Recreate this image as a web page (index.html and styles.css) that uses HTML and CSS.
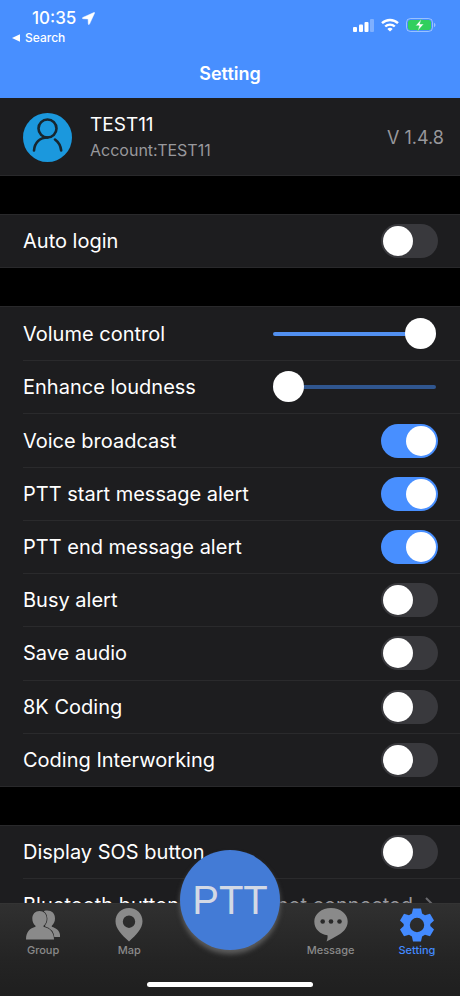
FILE: index.html
```html
<!DOCTYPE html>
<html lang="en">
<head>
<meta charset="utf-8">
<meta name="viewport" content="width=device-width, initial-scale=1">
<title>Setting</title>
<link rel="stylesheet" href="styles.css">
</head>
<body>
<div class="app">
  <header class="header">
    <div class="status">
      <div class="status-left">
        <div class="clock">10:35
          <svg width="13" height="13" viewBox="0 0 13 13" aria-hidden="true"><path d="M12 .5.8 5.500c-.6.3-.5 1.200.2 1.200l5.100.2.2 5c0 .8.9.9 1.200.2L12.600 1c.2-.4-.2-.7-.6-.5z" fill="#fff" stroke="#fff" stroke-width=".5"/></svg>
        </div>
        <a class="back" href="#search"><svg width="8" height="8" viewBox="0 0 8 8" aria-hidden="true"><path d="M0 4 8 .2v7.6z" fill="#fff"/></svg>Search</a>
      </div>
      <div class="status-right">
        <svg width="21" height="14" viewBox="0 0 21 14" aria-hidden="true"><g fill="#fff"><rect x="0" y="9" width="4" height="5" rx="1"/><rect x="6" y="6.500" width="4" height="7.500" rx="1"/><rect x="11.500" y="4" width="4" height="10" rx="1"/><rect x="17" y="1" width="4" height="13" rx="1" opacity=".3"/></g></svg>
        <svg width="18" height="14" viewBox="0 0 18 14" aria-hidden="true"><g fill="none" stroke="#fff" stroke-width="2.400"><path d="M1 5.200a11.500 11.500 0 0 1 16 0"/><path d="M4.200 8.500a7 7 0 0 1 9.600 0"/></g><path d="M9 13.600 6.300 10.900a4 4 0 0 1 5.400 0z" fill="#fff"/></svg>
        <svg width="30" height="14" viewBox="0 0 30 14" aria-hidden="true"><rect x=".5" y=".5" width="26" height="13" rx="4" fill="none" stroke="#fff" stroke-opacity=".45"/><rect x="2" y="2" width="23" height="10" rx="2.500" fill="#31cf5d"/><path d="M28 4.800c2 .8 2 3.600 0 4.400z" fill="#fff" opacity=".45"/><path d="M15.500 1 9.500 7.800h3.700L11.600 13l6.200-7h-3.900z" fill="#fff" stroke="#31cf5d" stroke-width=".5"/></svg>
      </div>
    </div>
    <h1 class="title">Setting</h1>
  </header>

  <main class="content">
    <section class="profile">
      <svg class="avatar" viewBox="0 0 49 49" aria-hidden="true"><circle cx="24.500" cy="24.500" r="24.500" fill="#1b98dd"/><g fill="none" stroke="#17262f" stroke-width="2.600" stroke-linecap="round"><circle cx="24.500" cy="15.500" r="9"/><path d="M11 37.500c.6-7.500 5.500-13 13.500-13"/><path d="M32 26.500c3.500 2.500 5.600 6.300 6.200 11"/></g></svg>
      <div class="who">
        <div class="name">TEST11</div>
        <div class="account">Account:TEST11</div>
      </div>
      <div class="version">V 1.4.8</div>
    </section>

    <section class="group">
      <label class="row"><span>Auto login</span><input class="switch" type="checkbox" role="switch"></label>
    </section>

    <section class="group group-audio">
      <label class="row"><span>Volume control</span><input class="slider slider-full" type="range" min="0" max="100" value="100"></label>
      <label class="row"><span>Enhance loudness</span><input class="slider" type="range" min="0" max="100" value="0"></label>
      <label class="row"><span>Voice broadcast</span><input class="switch" type="checkbox" role="switch" checked></label>
      <label class="row"><span>PTT start message alert</span><input class="switch" type="checkbox" role="switch" checked></label>
      <label class="row"><span>PTT end message alert</span><input class="switch" type="checkbox" role="switch" checked></label>
      <label class="row"><span>Busy alert</span><input class="switch" type="checkbox" role="switch"></label>
      <label class="row"><span>Save audio</span><input class="switch" type="checkbox" role="switch"></label>
      <label class="row"><span>8K Coding</span><input class="switch" type="checkbox" role="switch"></label>
      <label class="row"><span>Coding Interworking</span><input class="switch" type="checkbox" role="switch"></label>
    </section>

    <section class="group">
      <label class="row"><span>Display SOS button</span><input class="switch" type="checkbox" role="switch"></label>
      <a class="row" href="#bluetooth"><span>Bluetooth button</span><span class="value">not connected <svg width="9" height="16" viewBox="0 0 9 16" aria-hidden="true"><path d="m1 1 7 7-7 7" fill="none" stroke="#6a6a6e" stroke-width="2"/></svg></span></a>
    </section>
  </main>

  <footer class="footer">
    <button class="ptt" type="button">PTT</button>
    <nav class="tabs">
      <a class="tab" href="#group">
        <svg width="34" height="34" viewBox="0 0 34 34" aria-hidden="true"><path d="M18 3c6.500-1.500 11 1.500 11 7.500 0 3-1.200 5.500-3.200 7.300v1c5 1.600 8.400 4.200 8.400 10.200H20z" fill="#8a8a8a"/><path d="M13.500 3c4.200 0 7.200 3 7.200 7.500 0 3-1.200 5.700-3.200 7.300v1c6 1.400 10.500 5 10.500 12.700H0c0-7.700 4-11.300 9.500-12.700v-1c-2-1.600-3.200-4.300-3.200-7.300C6.300 6 9.300 3 13.500 3z" fill="#8a8a8a" stroke="#2b2b2b" stroke-width="1.400" paint-order="stroke"/></svg>
        <span>Group</span>
      </a>
      <a class="tab" href="#map">
        <svg width="34" height="34" viewBox="0 0 34 34" aria-hidden="true"><path fill-rule="evenodd" d="M17 0c7.700 0 13.500 5.800 13.500 13.300C30.500 21 24 27 17 33.500 10 27 3.500 21 3.500 13.300 3.500 5.800 9.300 0 17 0zm0 7.500a6.200 6.200 0 1 0 0 12.400 6.200 6.200 0 0 0 0-12.400z" fill="#8a8a8a"/></svg>
        <span>Map</span>
      </a>
      <a class="tab tab-message" href="#message">
        <svg width="34" height="34" viewBox="0 0 34 34" aria-hidden="true"><path d="M17 0c9.400 0 16.700 6 16.700 13.500 0 7-5.500 11.500-10.200 14-4 2.200-7.500 4.200-11 6 .8-1.800 1.300-3.800 1-6.200C6 26.300.3 21 .3 13.500.3 6 7.600 0 17 0z" fill="#8a8a8a"/><g fill="#292929"><circle cx="8.700" cy="13.500" r="2.300"/><circle cx="17" cy="13.500" r="2.300"/><circle cx="25.500" cy="13.500" r="2.300"/></g></svg>
        <span>Message</span>
      </a>
      <a class="tab tab-active" href="#setting" aria-current="page">
        <svg width="34" height="34" viewBox="0 0 34 34" aria-hidden="true"><path fill-rule="evenodd" d="M13 .5h8l1.100 5 2.900 1.700 5-1.500 4 6.800-3.700 3.400v2.200l3.700 3.400-4 6.800-5-1.500-2.900 1.700-1.100 5h-8l-1.100-5L9 26.800l-5 1.500-4-6.800 3.700-3.400v-2.200L0 12.500l4-6.800 5 1.500 2.900-1.700zM17 9.800a7.200 7.200 0 1 0 0 14.400 7.200 7.200 0 0 0 0-14.400z" fill="#438aff"/></svg>
        <span>Setting</span>
      </a>
    </nav>
    <div class="home-bar"></div>
  </footer>
</div>
</body>
</html>
```
FILE: styles.css
```css
* {
  box-sizing: border-box;
}

body {
  margin: 0;
  background: #000;
  color: #fff;
  font-family: Inter, "Liberation Sans", sans-serif;
}

a {
  color: inherit;
  text-decoration: none;
}

svg {
  display: block;
  flex: none;
}

.app {
  display: flex;
  flex-direction: column;
  height: 100vh;
}

/* Header */
.header {
  flex: none;
  padding: 8px 24px 12px 12px;
  background: #488fff;
}

.status {
  display: flex;
  justify-content: space-between;
}

.clock {
  display: flex;
  align-items: center;
  gap: 6px;
  padding-left: 20px;
  font-size: 17px;
  font-weight: 500;
  line-height: 20px;
}

.back {
  display: flex;
  align-items: center;
  gap: 5px;
  font-size: 12px;
  font-weight: 500;
  line-height: 20px;
}

.status-right {
  display: flex;
  gap: 7px;
  padding-top: 10px;
}

.title {
  margin: 14px 0 0 12px;
  font-size: 18px;
  font-weight: 600;
  line-height: 24px;
  text-align: center;
}

/* Settings list */
.content {
  display: flex;
  flex: 1;
  flex-direction: column;
  gap: 38px;
  min-height: 0;
  overflow: hidden;
}

.profile {
  display: flex;
  flex: none;
  align-items: center;
  gap: 18px;
  padding: 14px 16px 13px 23px;
  border-bottom: 1px solid #29292b;
  background: #1d1d1f;
}

.avatar {
  width: 49px;
  height: 49px;
}

.who {
  flex: 1;
}

.name {
  font-size: 19px;
  line-height: 26px;
}

.account {
  color: #98989c;
  font-size: 16px;
  line-height: 24px;
}

.version {
  color: #98989c;
  font-size: 18px;
}

.group {
  display: grid;
  flex: none;
  grid-auto-rows: 1fr;
  border-top: 1px solid #29292b;
  border-bottom: 1px solid #29292b;
  background: #1d1d1f;
}

.group-audio {
  min-height: 481px;
}

.row {
  display: flex;
  align-items: center;
  justify-content: space-between;
  min-height: 52px;
  margin-left: 23px;
  padding-right: 22px;
  font-size: 20px;
  line-height: 28px;
}

.row + .row {
  border-top: 1px solid #2a2a2c;
}

.value {
  display: flex;
  align-items: center;
  gap: 12px;
  padding-right: 4px;
  color: #98989c;
}

.switch {
  appearance: none;
  display: flex;
  align-items: center;
  flex: none;
  width: 57px;
  height: 34px;
  margin: 0;
  padding: 0 2px;
  border-radius: 17px;
  background: #39393d;
}

.switch::before {
  content: "";
  width: 30px;
  height: 30px;
  border-radius: 50%;
  background: #fff;
}

.switch:checked {
  justify-content: flex-end;
  background: #488fff;
}

.slider {
  appearance: none;
  width: 163px;
  height: 31px;
  margin: 0 2px 0 0;
  background: none;
}

.slider::-webkit-slider-runnable-track {
  height: 4px;
  border-radius: 2px;
  background: #30568f;
}

.slider-full::-webkit-slider-runnable-track {
  background: #5290f0;
}

.slider::-webkit-slider-thumb {
  appearance: none;
  width: 31px;
  height: 31px;
  margin-top: -14px;
  border-radius: 50%;
  background: #fff;
}

/* Bottom bar */
.footer {
  position: relative;
  flex: none;
  padding: 4px 0 9px;
  border-top: 1px solid #343434;
  background: linear-gradient(#303030, #242424 60%, #1f1f1f);
}

.tabs {
  display: grid;
  grid-template-columns: 3fr 3fr 4fr 3fr 3fr;
}

.tab {
  display: flex;
  flex-direction: column;
  align-items: center;
  color: #8a8a8a;
  font-size: 11px;
  font-weight: 500;
  line-height: 16px;
}

.tab-message {
  grid-column: 4;
}

.tab-active {
  color: #438aff;
}

.ptt {
  position: absolute;
  top: -54px;
  left: calc(50% - 50px);
  width: 100px;
  height: 100px;
  padding: 0;
  border: 0;
  border-radius: 50%;
  background: #437bd6;
  box-shadow: 0 4px 5px #5d5d5d;
  color: #d3d9e5;
  font-family: "Liberation Sans", sans-serif;
  font-size: 40px;
}

.home-bar {
  width: 36%;
  height: 5px;
  margin: 24px auto 0;
  border-radius: 3px;
  background: #fff;
}
```
